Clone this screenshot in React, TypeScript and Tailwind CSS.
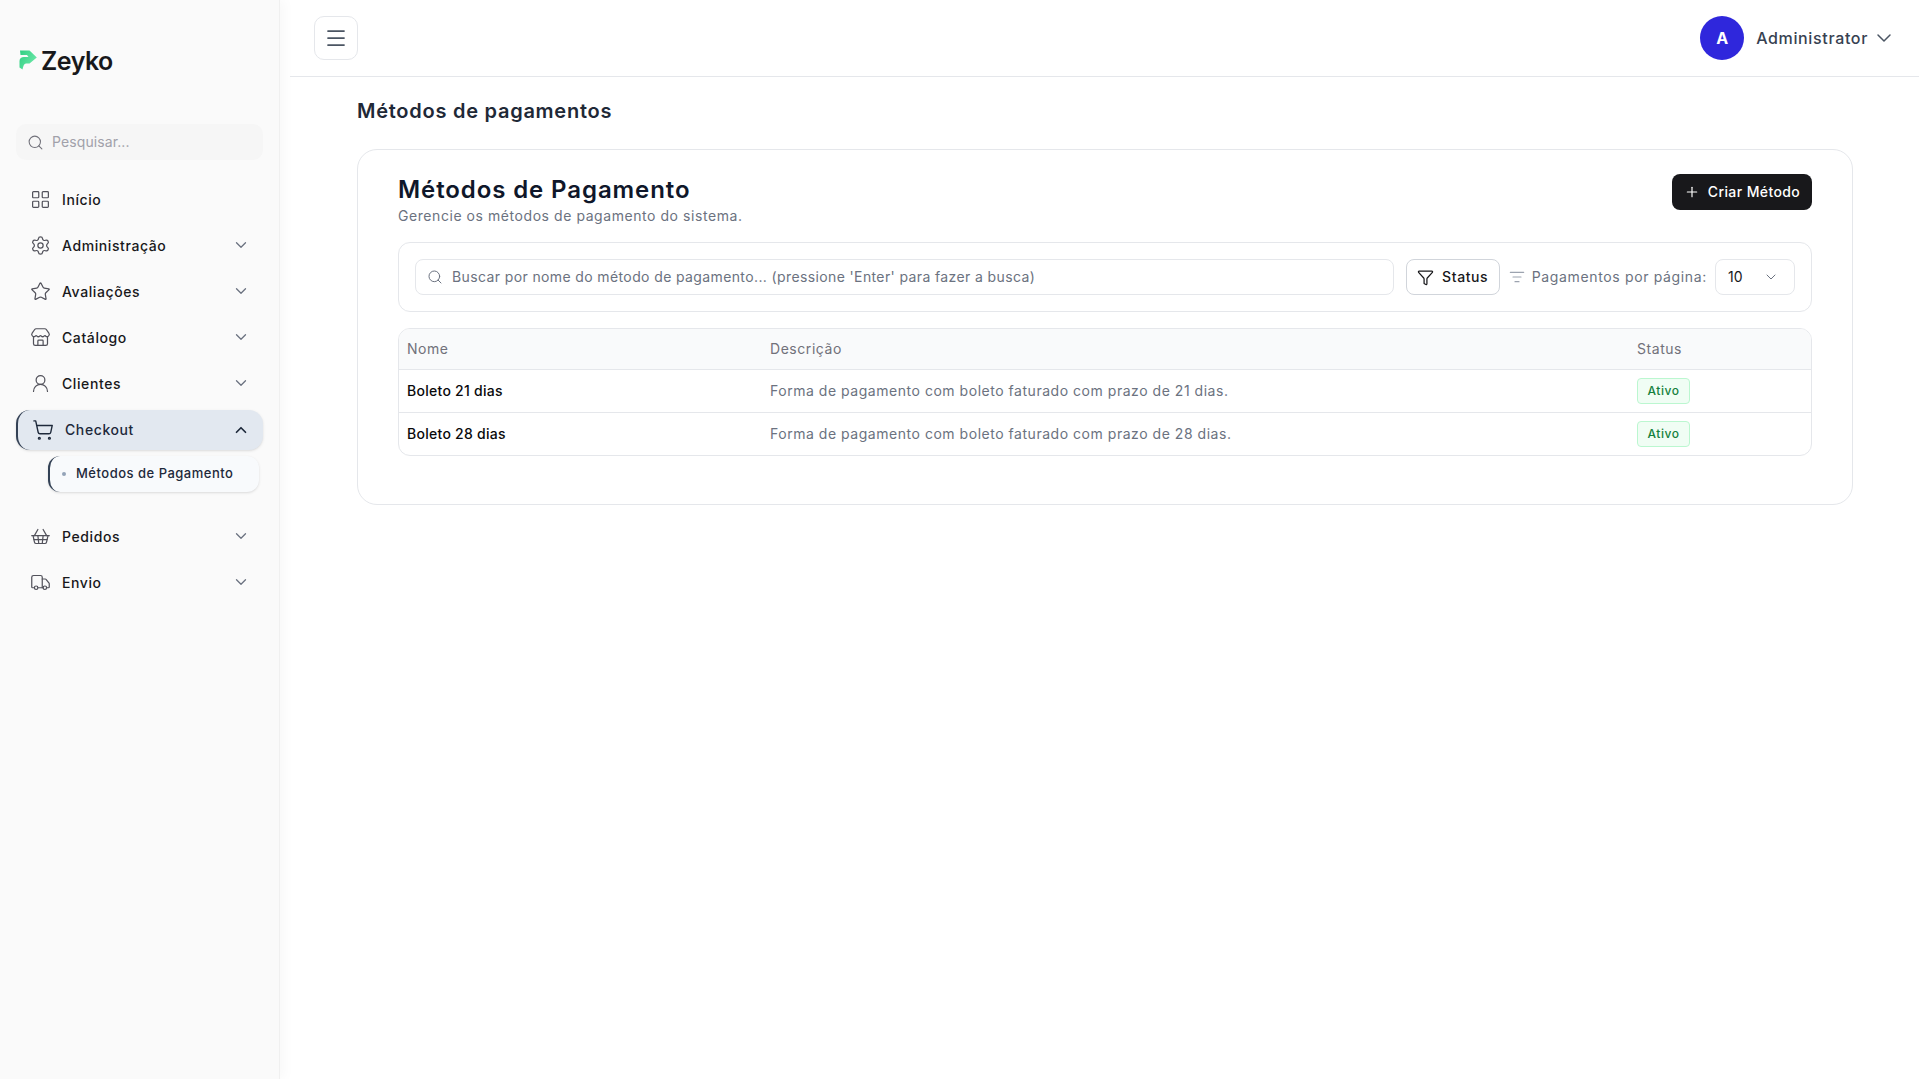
import React from 'react';
import {
  ChevronDown,
  ChevronUp,
  Funnel,
  LayoutGrid,
  ListFilter,
  Menu,
  Plus,
  Search,
  Settings,
  ShoppingBasket,
  ShoppingCart,
  Star,
  Store,
  Truck,
  UserRound,
} from 'lucide-react';

const navTop = [
  { label: 'Início', icon: LayoutGrid, arrow: false },
  { label: 'Administração', icon: Settings, arrow: true },
  { label: 'Avaliações', icon: Star, arrow: true },
  { label: 'Catálogo', icon: Store, arrow: true },
  { label: 'Clientes', icon: UserRound, arrow: true },
];

const navBottom = [
  { label: 'Pedidos', icon: ShoppingBasket, arrow: true },
  { label: 'Envio', icon: Truck, arrow: true },
];

const rows = [
  { name: 'Boleto 21 dias', desc: 'Forma de pagamento com boleto faturado com prazo de 21 dias.' },
  { name: 'Boleto 28 dias', desc: 'Forma de pagamento com boleto faturado com prazo de 28 dias.' },
];

const NavItem: React.FC<{ label: string; icon: React.ElementType; arrow: boolean }> = ({ label, icon: Icon, arrow }) => (
  <div className="flex h-[46px] items-center pl-[30px] pr-[29px] text-[14px] font-medium tracking-[0.6px] text-[#18181b]">
    <Icon className="h-[21px] w-[21px] text-[#52525b]" strokeWidth={1.4} />
    <span className="ml-[11px] flex-1">{label}</span>
    {arrow && <ChevronDown className="h-[18px] w-[18px] text-[#6b7280]" strokeWidth={1.75} />}
  </div>
);

const Logo = () => (
  <svg width="18" height="20" viewBox="0 0 18 20" className="mb-[4px]">
    <defs>
      <linearGradient id="zeyko" x1="0" y1="0" x2="1" y2="0.6">
        <stop offset="0" stopColor="#2fce82" />
        <stop offset="1" stopColor="#6ce8a8" />
      </linearGradient>
    </defs>
    <path d="M1 0.5h9.5L17.8 7.5 10.5 13.5H7C5 13.8 4.2 16 3.5 19.5L0.5 17.5V11C0.5 8.5 2.5 7 5 7H9.5L8 5H1.5Z" fill="url(#zeyko)" />
  </svg>
);

const Sidebar = () => (
  <aside className="flex w-[280px] shrink-0 flex-col border-r border-[#f0f0f0] bg-[#fafafa] shadow-[4px_0_12px_rgba(0,0,0,0.03)]">
    <div className="flex h-[124px] items-center gap-[4px] pl-[19px]">
      <Logo />
      <span className="text-[25px] font-semibold tracking-[-0.5px] text-[#18181b]">Zeyko</span>
    </div>
    <div className="mx-4 flex h-9 items-center gap-[8px] rounded-[10px] bg-[#f6f6f6] pl-[11px] text-[14px] text-[#a1a1aa]">
      <Search className="h-[17px] w-[17px] text-[#71717a]" strokeWidth={1.5} />
      <span className="pb-px tracking-[0.1px]">Pesquisar...</span>
    </div>
    <nav className="mt-[16px] flex flex-col">
      {navTop.map((item) => (
        <NavItem key={item.label} {...item} />
      ))}
      <div className="mx-4 mt-[4px] flex h-10 items-center rounded-[14px] border-l-[2px] border-[#334155] bg-[#e2e8f0] pl-[14px] pr-[13px] text-[14px] font-medium tracking-[0.6px] text-[#1e293b] shadow-sm">
        <ShoppingCart className="h-[22px] w-[22px]" strokeWidth={1.5} />
        <span className="ml-[11px] flex-1 pb-[2px]">Checkout</span>
        <ChevronUp className="h-[18px] w-[18px]" strokeWidth={2.25} />
      </div>
      <div className="ml-[48px] mr-[20px] mt-[6px] flex h-9 items-center rounded-[12px] border-l-[2px] border-[#334155] bg-[#f8fafc] pl-[12px] text-[13px] font-medium tracking-[0.5px] text-[#1e293b] shadow-sm">
        <span className="h-[4px] w-[4px] rounded-full bg-[#94a3b8]" />
        <span className="ml-[10px]">Métodos de Pagamento</span>
      </div>
      <div className="mt-[21px] flex flex-col">
        {navBottom.map((item) => (
          <NavItem key={item.label} {...item} />
        ))}
      </div>
    </nav>
  </aside>
);

const Topbar = () => (
  <header className="ml-[10px] flex h-[77px] items-center justify-between border-b border-[#e5e7eb] pl-[24px] pr-[23px]">
    <button className="flex h-11 w-11 items-center justify-center rounded-[10px] border border-[#e5e7eb] text-[#4b5563]">
      <Menu className="h-6 w-6" strokeWidth={1.75} />
    </button>
    <div className="flex items-center">
      <div className="flex h-11 w-11 items-center justify-center rounded-full bg-[#2f27dc] text-[16px] font-bold text-white">A</div>
      <span className="ml-3 pb-px text-[16px] font-medium tracking-[0.65px] text-[#374151]">Administrator</span>
      <ChevronDown className="ml-[4px] h-6 w-6 text-[#4b5563]" strokeWidth={1.5} />
    </div>
  </header>
);

const Toolbar = () => (
  <div className="mt-4 flex h-[70px] items-center rounded-[12px] border border-[#e5e7eb] px-4">
    <div className="flex h-9 flex-1 items-center rounded-[8px] border border-[#e5e7eb] pl-[11px] text-[14px] tracking-[0.38px] text-[#6b7280]">
      <Search className="h-4 w-4 text-[#6b7280]" strokeWidth={1.5} />
      <span className="ml-[9px] pb-[2px]">Buscar por nome do método de pagamento... (pressione 'Enter' para fazer a busca)</span>
    </div>
    <button className="ml-3 flex h-9 w-[94px] items-center justify-center gap-[8px] rounded-[8px] border border-[#d1d5db] text-[14px] font-medium tracking-[0.6px] text-[#18181b]">
      <Funnel className="h-[17px] w-[17px]" strokeWidth={1.75} />
      <span className="pb-[2px]">Status</span>
    </button>
    <ListFilter className="ml-[9px] h-4 w-4 text-[#9ca3af]" strokeWidth={1.75} />
    <span className="ml-[7px] pb-[2px] text-[14px] tracking-[0.65px] text-[#6b7280]">Pagamentos por página:</span>
    <div className="ml-2 flex h-9 w-[80px] items-center justify-between rounded-[8px] border border-[#e5e7eb] pl-3 pr-[15px] text-[14px] text-[#18181b]">
      <span className="pb-[2px]">10</span>
      <ChevronDown className="h-4 w-4 text-[#6b7280]" strokeWidth={1.5} />
    </div>
  </div>
);

const Table = () => (
  <div className="mt-4 overflow-hidden rounded-[12px] border border-[#e5e7eb]">
    <div className="grid h-[41px] grid-cols-[363px_867px_1fr] items-center border-b border-[#e5e7eb] bg-[#f9fafb] pb-[2px] pl-2 text-[14px] tracking-[0.55px] text-[#71717a]">
      <span>Nome</span>
      <span>Descrição</span>
      <span>Status</span>
    </div>
    {rows.map((row, i) => (
      <div
        key={row.name}
        className={`grid grid-cols-[363px_867px_1fr] items-center pl-2 text-[14px] ${i === 0 ? 'h-[43px] border-b border-[#e5e7eb]' : 'h-[42px]'}`}
      >
        <span className="pb-[2px] font-medium tracking-[0.27px] text-[#09090b]">{row.name}</span>
        <span className="pb-[2px] tracking-[0.53px] text-[#6b7280]">{row.desc}</span>
        <span className="flex h-[26px] w-[53px] items-center justify-center rounded-[4px] border border-[#bbf7d0] bg-[#f0fdf4] text-[12px] font-medium tracking-[0.5px] text-[#15803d]">
          Ativo
        </span>
      </div>
    ))}
  </div>
);

export default function App() {
  return (
    <div className="flex min-h-[1079px] bg-white font-['Inter','Noto_Sans',sans-serif]">
      <Sidebar />
      <div className="flex min-w-0 flex-1 flex-col">
        <Topbar />
        <main className="pl-[77px] pr-[66px]">
          <h1 className="mt-[20px] text-[20px] font-semibold leading-[28px] tracking-[0.74px] text-[#1f2937]">Métodos de pagamentos</h1>
          <section className="mt-[24px] rounded-[20px] border border-[#e5e7eb] px-10 pb-12 pt-6">
            <div className="flex items-start justify-between">
              <div>
                <h2 className="text-[24px] font-semibold leading-[32px] tracking-[0.9px] text-[#0f172a]">Métodos de Pagamento</h2>
                <p className="text-[14px] leading-[20px] tracking-[0.56px] text-[#6b7280]">Gerencie os métodos de pagamento do sistema.</p>
              </div>
              <button className="flex h-9 w-[140px] items-center justify-center gap-2 rounded-[8px] bg-[#18181b] text-[14px] font-medium tracking-[0.4px] text-white">
                <Plus className="h-4 w-4" strokeWidth={1.75} />
                <span className="pb-px">Criar Método</span>
              </button>
            </div>
            <Toolbar />
            <Table />
          </section>
        </main>
      </div>
    </div>
  );
}
